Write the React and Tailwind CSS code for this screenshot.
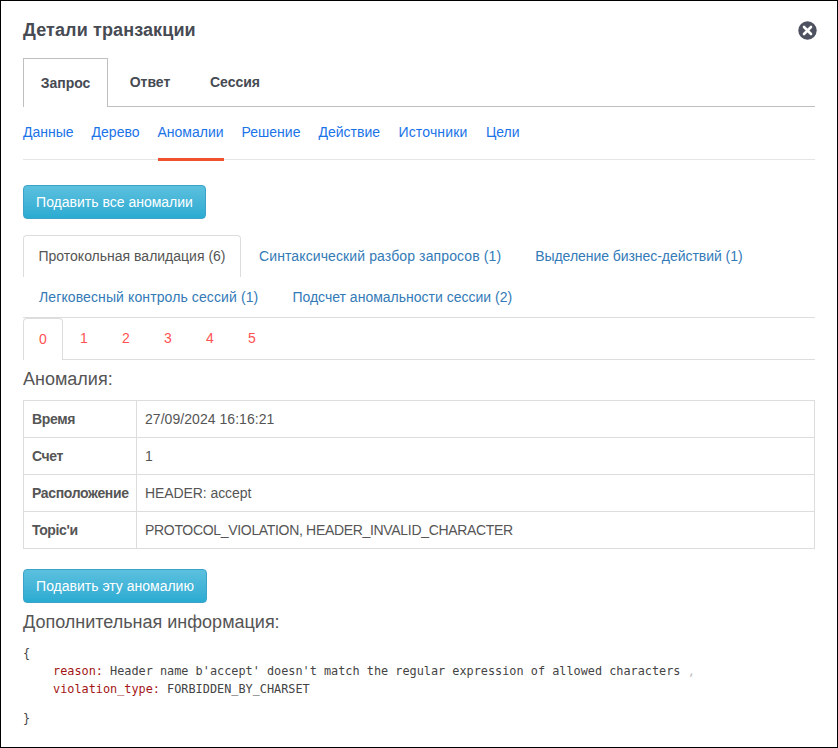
const sans = { fontFamily: '"Liberation Sans", Arial, sans-serif' };

function Cell({ label, value, last, valueClass }) {
  return (
    <div className={`flex ${last ? "h-[36px]" : "h-[37px] border-b border-[#dddddd]"}`}>
      <div className="w-[113px] shrink-0 border-r border-[#dddddd] pl-2 flex items-center font-bold text-[14px] text-[#555555] tracking-[-0.35px]">{label}</div>
      <div className={`pl-2 flex items-center text-[14px] text-[#555555] ${valueClass}`}>{value}</div>
    </div>
  );
}

const blueBtn = "block h-[34px] rounded border border-[#3ba2c8] bg-gradient-to-b from-[#5bc0de] to-[#2aabd2] text-white text-[14px] text-center";

export default function App() {
  return (
    <div className="w-[838px] h-[748px] bg-white border border-black overflow-hidden box-border pl-[22px] pr-[22px]" style={sans}>
      <div className="flex items-center justify-between h-[57px] pt-[1px]">
        <h2 className="text-[18px] font-bold text-[#464a53] tracking-[0.12px]">Детали транзакции</h2>
        <svg width="19" height="19" viewBox="0 0 19 19" className="mr-[-2px]">
          <circle cx="9.5" cy="9.5" r="9.2" fill="#4d5160" />
          <path d="M6 6l7 7M13 6l-7 7" stroke="#ffffff" strokeWidth="2.6" strokeLinecap="round" />
        </svg>
      </div>

      <div className="flex h-[49px] border-b border-[#bfbfbf] text-[14px] font-bold text-[#464a53]">
        <div className="h-[49px] w-[85px] border border-b-0 border-[#bfbfbf] bg-white flex items-center justify-center">Запрос</div>
        <div className="w-[84px] flex items-center justify-center">Ответ</div>
        <div className="w-[86px] flex items-center justify-center">Сессия</div>
      </div>

      <div className="flex h-[53px] gap-[18px] border-b border-[#e5e5e5] text-[14px] text-[#1a73e8]">
        <a className="flex items-center pb-[1px]">Данные</a>
        <a className="flex items-center pb-[1px]">Дерево</a>
        <a className="flex items-center pb-[1px] h-[54px] border-b-[3px] border-[#f0522d]">Аномалии</a>
        <a className="flex items-center pb-[1px]">Решение</a>
        <a className="flex items-center pb-[1px]">Действие</a>
        <a className="flex items-center pb-[1px] ml-[0.5px] tracking-[0.15px]">Источники</a>
        <a className="flex items-center pb-[1px] ml-[0.5px]">Цели</a>
      </div>

      <button className={`${blueBtn} w-[183px] mt-[25px]`}>Подавить все аномалии</button>

      <div className="mt-4 border-b border-[#dddddd] text-[14px] text-[#337ab7] flex flex-wrap">
        <div className="h-[42px] w-[218px] border border-b-0 border-[#dddddd] rounded-t flex items-center justify-center text-[#555555]">Протокольная валидация (6)</div>
        <div className="h-[42px] ml-[18px] flex items-center tracking-[0.11px]">Синтаксический разбор запросов (1)</div>
        <div className="h-[42px] ml-[34px] flex items-center tracking-[-0.05px]">Выделение бизнес-действий (1)</div>
        <div className="basis-full h-0"></div>
        <div className="h-[40px] pl-4 flex items-center tracking-[0.11px]">Легковесный контроль сессий (1)</div>
        <div className="h-[40px] ml-[34px] flex items-center">Подсчет аномальности сессии (2)</div>
      </div>

      <div className="flex h-[42px] border-b border-[#dddddd] text-[14px] text-[#ff5252]">
        <div className="h-[42px] w-[40px] border border-b-0 border-[#dddddd] rounded-t bg-white flex items-center justify-center">0</div>
        <div className="w-[42px] flex items-center justify-center">1</div>
        <div className="w-[42px] flex items-center justify-center">2</div>
        <div className="w-[42px] flex items-center justify-center">3</div>
        <div className="w-[42px] flex items-center justify-center">4</div>
        <div className="w-[42px] flex items-center justify-center">5</div>
      </div>

      <h3 className="text-[18px] leading-5 text-[#555555] mt-[9px]">Аномалия:</h3>

      <div className="mt-[11px] border border-[#dddddd]">
        <Cell label="Время" value="27/09/2024 16:16:21" valueClass="tracking-[0.05px]" />
        <Cell label="Счет" value="1" />
        <Cell label="Расположение" value="HEADER: accept" valueClass="tracking-[-0.08px]" />
        <Cell label="Topic'и" value="PROTOCOL_VIOLATION, HEADER_INVALID_CHARACTER" valueClass="tracking-[-0.32px]" last />
      </div>

      <button className={`${blueBtn} w-[184px] mt-[20px]`}>Подавить эту аномалию</button>

      <h3 className="text-[18px] leading-5 text-[#555555] mt-[9px]">Дополнительная информация:</h3>

      <div className="mt-[12px] text-[11.85px] leading-[18px] text-[#444444] whitespace-pre" style={{ fontFamily: '"DejaVu Sans Mono", monospace' }}>
        <div>{"{"}</div>
        <div className="pl-[30px]"><span className="text-[#a31515]">reason:</span>{" Header name b'accept' doesn't match the regular expression of allowed characters "}<span className="text-[#bbbbbb]">,</span></div>
        <div className="pl-[30px]"><span className="text-[#a31515]">violation_type:</span>{" FORBIDDEN_BY_CHARSET"}</div>
        <div className="mt-[11px]">{"}"}</div>
      </div>
    </div>
  );
}
